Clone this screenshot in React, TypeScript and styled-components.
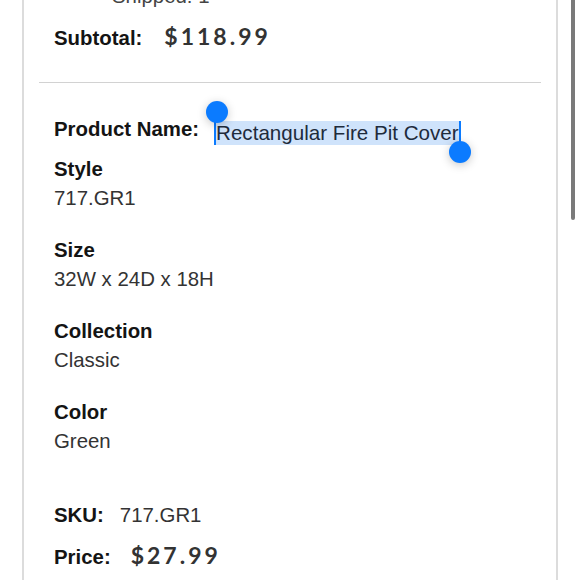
import React from "react";
import styled, { createGlobalStyle } from "styled-components";

const GlobalStyle = createGlobalStyle`
  html, body {
    margin: 0;
    padding: 0;
    background: #fff;
    overflow: hidden;
    height: 100%;
  }
  body {
    font-family: "Liberation Sans", Arial, sans-serif;
    color: #1a1a1a;
  }
`;

const Page = styled.div`
  position: relative;
  width: 580px;
  height: 580px;
  overflow: hidden;
`;

const Card = styled.div`
  margin-left: 22px;
  width: 532px;
  border-left: 2px solid #dcdcdc;
  border-right: 2px solid #dcdcdc;
  min-height: 640px;
`;

const Section = styled.div`
  padding-left: 30px;
`;

const Shipped = styled.div`
  margin-top: -18px;
  padding-left: 58px;
  font-size: 20.4px;
  line-height: 29px;
  color: #444;
`;

const Row = styled.div<{ $gap: number; $mt: number; $lh?: number; $align?: string }>`
  display: flex;
  align-items: ${(p) => p.$align ?? "baseline"};
  gap: ${(p) => p.$gap}px;
  margin-top: ${(p) => p.$mt}px;
  line-height: ${(p) => p.$lh ?? 29}px;
`;

const Label = styled.span`
  font-size: 20.4px;
  font-weight: 700;
  color: #141414;
`;

const Value = styled.span`
  font-size: 20.4px;
  color: #333;
`;

const Money = styled.span`
  font-family: Lato, "Liberation Sans", sans-serif;
  font-size: 23px;
  font-weight: 700;
  letter-spacing: 3px;
  color: #333;
`;

const Divider = styled.hr`
  margin: 29px 15px 0;
  border: none;
  border-top: 1px solid #d2d2d2;
  height: 0;
`;

const Selected = styled.span`
  position: relative;
  display: inline-block;
  font-size: 20.6px;
  line-height: 24px;
  padding: 0 2px;
  margin-top: 6px;
  background: #cfe3fb;
  color: #1e2b3c;
`;

const Caret = styled.span<{ $side: "left" | "right" }>`
  position: absolute;
  top: 0;
  ${(p) => (p.$side === "left" ? "left: 0;" : "right: 0;")}
  width: 2px;
  height: ${(p) => (p.$side === "left" ? 24 : 28)}px;
  background: #0b7bff;
`;

const Handle = styled.span<{ $side: "left" | "right" }>`
  position: absolute;
  width: 22px;
  height: 22px;
  border-radius: 50%;
  background: #0b7bff;
  box-shadow: 0 2px 10px rgba(0, 0, 0, 0.22);
  ${(p) =>
    p.$side === "left"
      ? "left: -8px; top: -20px;"
      : "right: -10px; top: 20px;"}
`;

const Group = styled.div`
  margin-top: 10px;
  line-height: 29px;
  & + & {
    margin-top: 23px;
  }
`;

const GroupLabel = styled.div`
  font-size: 20.4px;
  font-weight: 700;
  color: #141414;
`;

const GroupValue = styled.div`
  font-size: 20.4px;
  color: #333;
`;

const Scrollbar = styled.div`
  position: absolute;
  top: -4px;
  left: 571px;
  width: 4px;
  height: 224px;
  border-radius: 2px;
  background: #7a7a7a;
`;

const details = [
  { label: "Style", value: "717.GR1" },
  { label: "Size", value: "32W x 24D x 18H" },
  { label: "Collection", value: "Classic" },
  { label: "Color", value: "Green" },
];

export default function App() {
  return (
    <Page>
      <GlobalStyle />
      <Card>
        <Section>
          <Shipped>Shipped: 1</Shipped>
          <Row $gap={22} $mt={10} $lh={30}>
            <Label>Subtotal:</Label>
            <Money>$118.99</Money>
          </Row>
        </Section>
        <Divider />
        <Section>
          <Row $gap={15} $mt={32} $align="flex-start">
            <Label>Product Name:</Label>
            <Selected>
              Rectangular Fire Pit Cover
              <Caret $side="left" />
              <Handle $side="left" />
              <Caret $side="right" />
              <Handle $side="right" />
            </Selected>
          </Row>
          {details.map((d) => (
            <Group key={d.label}>
              <GroupLabel>{d.label}</GroupLabel>
              <GroupValue>{d.value}</GroupValue>
            </Group>
          ))}
          <Row $gap={16} $mt={45}>
            <Label>SKU:</Label>
            <Value>717.GR1</Value>
          </Row>
          <Row $gap={20} $mt={9} $lh={32}>
            <Label>Price:</Label>
            <Money>$27.99</Money>
          </Row>
        </Section>
      </Card>
      <Scrollbar />
    </Page>
  );
}
